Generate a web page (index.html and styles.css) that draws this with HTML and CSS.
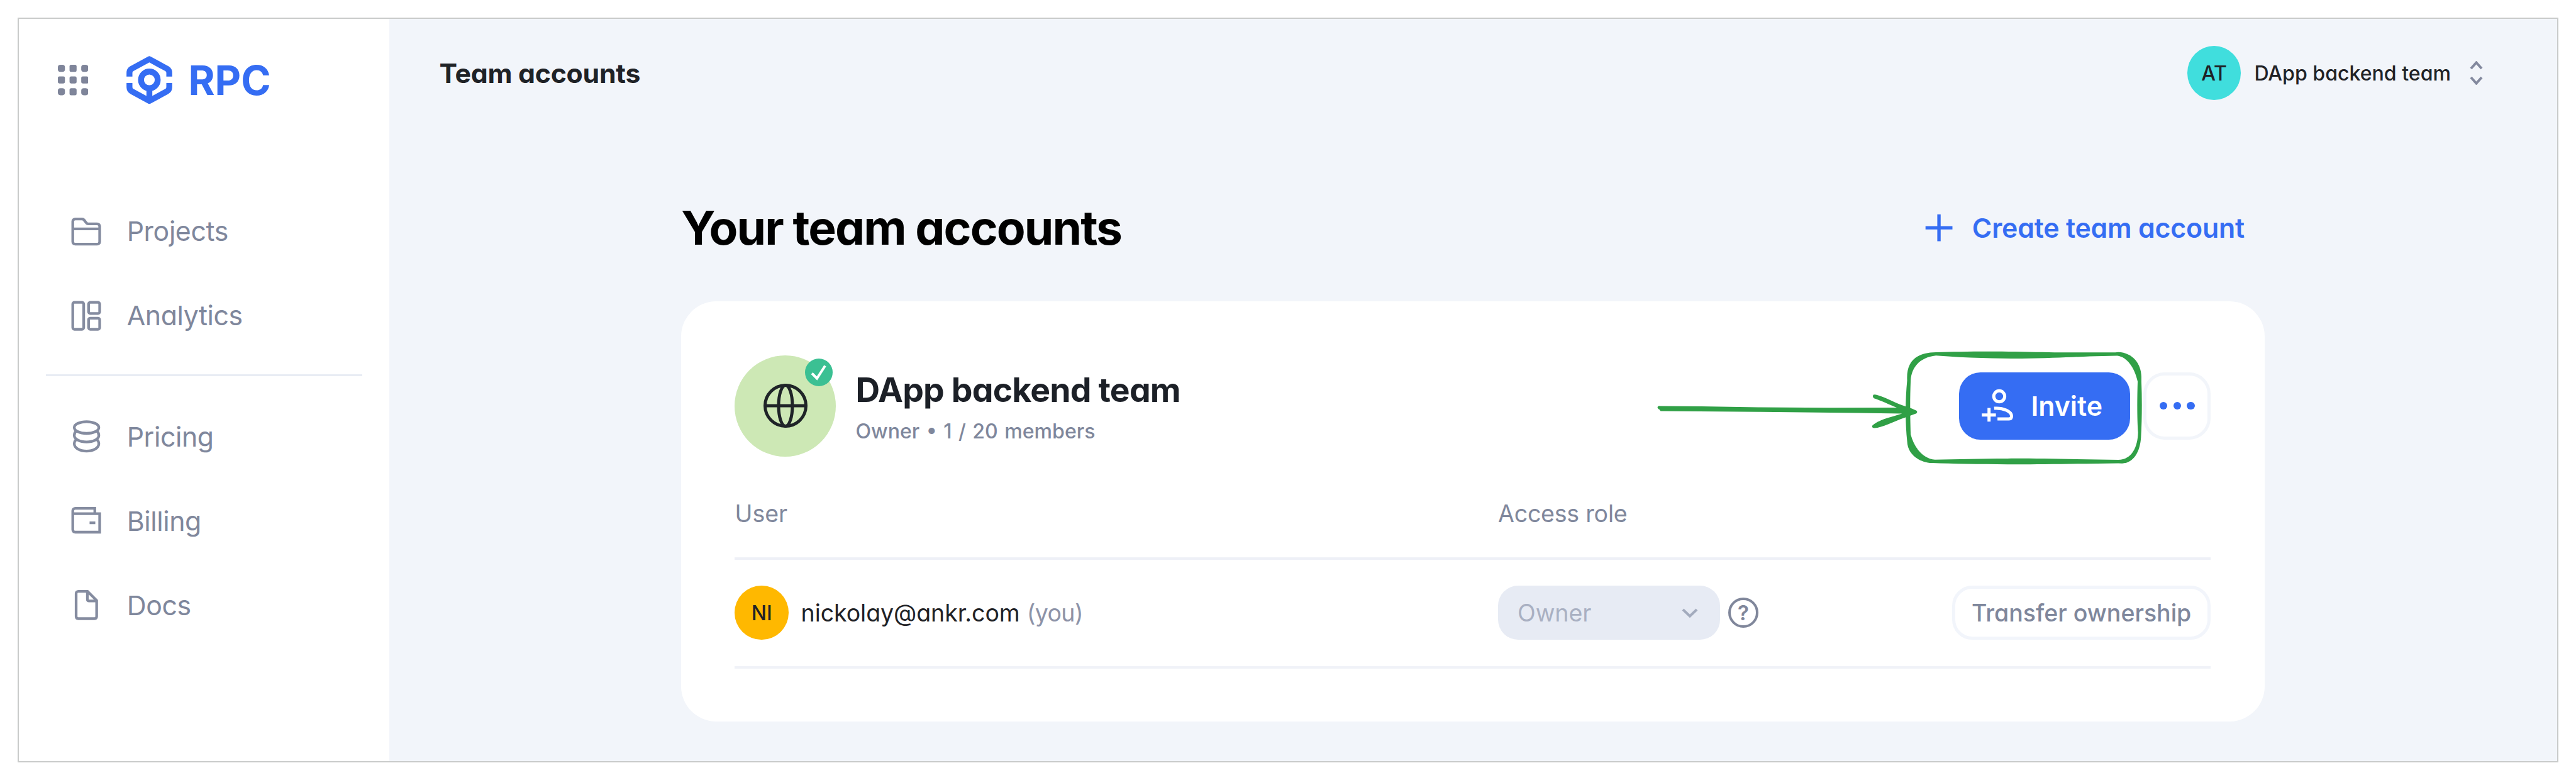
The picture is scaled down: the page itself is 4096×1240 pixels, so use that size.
FILE: index.html
```html
<!DOCTYPE html>
<html lang="en">
<head>
<meta charset="utf-8">
<title>Team accounts</title>
<link rel="stylesheet" href="styles.css">
</head>
<body>
<div class="frame">
  <aside class="sidebar">
    <div class="brand">
      <svg class="apps" viewBox="0 0 155 155"><rect width="36" height="36" rx="13"/><rect x="59.5" width="36" height="36" rx="8"/><rect x="119" width="36" height="36" rx="13"/><rect y="59.5" width="36" height="36" rx="8"/><rect x="59.5" y="59.5" width="36" height="36" rx="8"/><rect x="119" y="59.5" width="36" height="36" rx="8"/><rect y="119" width="36" height="36" rx="13"/><rect x="59.5" y="119" width="36" height="36" rx="8"/><rect x="119" y="119" width="36" height="36" rx="13"/></svg>
      <svg class="logo" viewBox="0 0 234 245"><path d="M15.500 105V86Q15.500 72 27 65L117 16L207 65Q218.500 72 218.500 86V105"/><path d="M15.500 138V159Q15.500 173 27 180L117 229L207 180Q218.500 173 218.500 159V138"/><circle cx="117" cy="122" r="42.500"/><path d="M117 164V226"/></svg>
      <span class="brand-name">RPC</span>
    </div>
    <nav class="nav">
      <a class="nav-item"><svg class="icon" viewBox="0 0 24 24"><path d="M4 6c0-.9.600-1.500 1.500-1.500h4c.5 0 .9.200 1.200.6l1.400 1.800c.3.300.6.500 1 .5h5.400c.9 0 1.500.6 1.500 1.500v9.100c0 .9-.6 1.500-1.500 1.500h-13c-.9 0-1.500-.6-1.500-1.500zM4 10.400h16"/></svg><span>Projects</span></a>
      <a class="nav-item"><svg class="icon" viewBox="0 0 24 24"><rect x="4" y="4" width="6.500" height="16" rx="1"/><rect x="13.400" y="4" width="6.600" height="6.600" rx="1"/><rect x="13.400" y="13.400" width="6.600" height="6.600" rx="1"/></svg><span>Analytics</span></a>
      <hr class="nav-rule">
      <a class="nav-item"><svg class="icon" viewBox="0 0 24 24"><ellipse cx="12.200" cy="6.600" rx="7.300" ry="3.500"/><path d="M6 8.700c-.7.700-1.100 1.500-1.100 2.600 0 2.200 3.300 3.900 7.300 3.900s7.300-1.700 7.300-3.900c0-1.100-.4-1.900-1.100-2.600M6 13.700c-.7.700-1.100 1.500-1.100 2.600 0 2.500 3.300 4.300 7.300 4.300s7.300-1.800 7.300-4.300c0-1.100-.4-1.900-1.100-2.600"/></svg><span>Pricing</span></a>
      <a class="nav-item"><svg class="icon" viewBox="0 0 24 24"><path d="M4 6c0-.9.600-1.500 1.500-1.500h11.600v3.200M4 7.700h16v11H5.500c-.9 0-1.500-.6-1.500-1.500V6M14 13.100h3.400"/></svg><span>Billing</span></a>
      <a class="nav-item"><svg class="icon" viewBox="0 0 24 24"><path d="M7.300 3.800h5.500l5.400 5.400v9.500c0 .8-.5 1.300-1.300 1.300H7.300c-.8 0-1.300-.5-1.300-1.300V5.100c0-.8.500-1.300 1.300-1.300zM12.700 4v4.500c0 .6.400 1 1 1h4.300"/></svg><span>Docs</span></a>
    </nav>
  </aside>
  <main class="main">
    <header class="topbar">
      <span class="page-name">Team accounts</span>
      <div class="switcher">
        <span class="avatar avatar-team">AT</span>
        <span class="switcher-name">DApp backend team</span>
        <svg class="updown" viewBox="0 0 21 38"><path d="M2 12L10.500 2.500L19 12M2 26L10.500 35.500L19 26"/></svg>
      </div>
    </header>
    <section class="content">
      <div class="heading">
        <h1>Your team accounts</h1>
        <a class="create"><svg class="plus" viewBox="0 0 24 24"><path d="M12 4v16M4 12h16"/></svg><span>Create team account</span></a>
      </div>
      <div class="card">
        <div class="team">
          <div class="team-pic">
            <svg class="globe" viewBox="0 0 70 70"><circle cx="35" cy="35" r="32.500"/><ellipse cx="35" cy="35" rx="11" ry="32.500"/><path d="M2.500 35h65"/></svg>
            <svg class="verified" viewBox="0 0 44 44"><circle cx="22" cy="22" r="22"/><path d="M11 23.500L19 31.500L32 11.500"/></svg>
          </div>
          <div class="team-text">
            <h2>DApp backend team</h2>
            <p class="team-meta">Owner • 1 / 20 members</p>
          </div>
          <div class="team-actions">
            <button class="invite"><svg class="user-plus" viewBox="620 245 172 180"><circle cx="716" cy="287" r="28"/><path d="M664 346v70M627 382h72M690 348C735 344 779 364 779 388C779 397 774 402 766 402H707"/></svg><span>Invite</span></button>
            <button class="more"><i></i><i></i><i></i></button>
          </div>
        </div>
        <div class="table">
          <div class="row head"><span>User</span><span class="role-head">Access role</span></div>
          <div class="row member">
            <div class="user"><span class="avatar avatar-user">NI</span><span class="email">nickolay@ankr.com</span><span class="you">(you)</span></div>
            <div class="role">
              <div class="select"><span>Owner</span><svg class="chevron" viewBox="0 0 26 15"><path d="M2 2L13 12.500L24 2"/></svg></div>
              <span class="help">?</span>
            </div>
            <button class="transfer">Transfer ownership</button>
          </div>
        </div>
      </div>
    </section>
  </main>
</div>
<svg class="marker" viewBox="-1040 40 2500 600">
  <path fill-rule="evenodd" d="M395 56C500 53 640 50 800 53C900 55 980 57 1060 57H1310L1325 55C1400 58 1442 115 1443 180V205C1447 300 1446 400 1441 490C1437 560 1405 621 1345 623L1325 622C1100 625 900 629 760 628C620 627 480 625 375 621C305 617 250 575 248 510C238 420 238 300 248 200C243 110 285 58 395 56ZM395 73C560 86 700 88 830 88C980 87 1100 80 1180 77L1320 74C1370 80 1408 135 1424 205C1421 300 1421 400 1426 465C1424 540 1395 603 1325 605C1100 602 900 597 760 598C620 598 500 602 390 604C335 600 285 550 266 475C263 370 262 300 266 200C270 130 315 82 395 73Z"/>
  <path d="M-1026 336Q-1024 329 -1012 330L-800 332L-500 337L-150 339L195 338C160 325 110 300 79 291Q69 284 76 273Q82 270 98 275C150 290 195 320 240 332L272 343L295 354Q303 361 295 368L240 388C170 412 125 440 80 443Q67 441 70 431C85 415 110 405 130 397C160 387 190 380 222 369L0 366L-500 360L-1010 356L-1016 348Q-1024 346 -1026 336Z"/>
</svg>
</body>
</html>
```
FILE: styles.css
```css
* { box-sizing: border-box; }

body {
  margin: 0;
  padding: 28px;
  width: 4096px;
  height: 1240px;
  overflow: hidden;
  background: #fff;
  color: #1f2226;
  font-family: Inter, "Liberation Sans", sans-serif;
  font-feature-settings: "cv11";
}

h1, h2, p { margin: 0; }
svg { display: block; flex: none; }
button { padding: 0; border: 0; background: none; font: inherit; font-feature-settings: inherit; color: inherit; }

.frame {
  display: flex;
  width: 4040px;
  height: 1184px;
  border: 2px solid #c9cbca;
}

.sidebar { width: 588.500px; flex: none; }

.brand {
  display: flex;
  align-items: center;
  height: 195px;
  padding-left: 62px;
}
.apps { width: 48.400px; height: 48.400px; fill: #7f859a; }
.logo {
  width: 73px;
  height: 76.400px;
  margin-left: 61px;
  fill: none;
  stroke: #356df3;
  stroke-width: 30;
  stroke-linejoin: round;
}
.brand-name {
  margin-left: 25px;
  font-size: 64.200px;
  font-weight: 700;
  color: #356df3;
}

.nav { padding: 76px 43px 0; }
.nav-item {
  display: flex;
  align-items: center;
  gap: 32.500px;
  height: 133.800px;
  padding-left: 32px;
  font-size: 42.800px;
  letter-spacing: -0.4px;
  color: #7f879c;
}
.icon {
  width: 64.200px;
  height: 64.200px;
  fill: none;
  stroke: #858ca0;
  stroke-width: 1.600;
}
.nav-rule { height: 3px; margin: 26px 0 30px; border: 0; background: #e8ecf4; }

.main { flex: 1; background: #f2f5fa; }

.topbar {
  display: flex;
  align-items: center;
  justify-content: space-between;
  height: 172px;
  padding: 0 118px 0 80px;
}
.page-name { font-size: 42.800px; font-weight: 700; letter-spacing: -0.27px; }
.switcher { display: flex; align-items: center; font-size: 32.100px; font-weight: 500; }
.switcher-name { margin-left: 21px; }
.updown { width: 21px; height: 38px; margin-left: 30px; fill: none; stroke: #83899e; stroke-width: 4; }

.avatar {
  display: flex;
  align-items: center;
  justify-content: center;
  width: 85.600px;
  height: 85.600px;
  border-radius: 50%;
  font-size: 32.100px;
  font-weight: 500;
}
.avatar-team { background: #40dedd; }
.avatar-user { background: #ffb800; }

.content { width: 2518px; margin-left: 464.400px; }
.heading {
  display: flex;
  align-items: center;
  justify-content: space-between;
  height: 107px;
  margin: 107px 0 63px;
  padding-right: 32px;
}
h1 { font-size: 74.900px; font-weight: 700; line-height: 1; letter-spacing: -1.95px; color: #000; }
.create {
  display: flex;
  align-items: center;
  gap: 21px;
  font-size: 42.800px;
  font-weight: 600;
  letter-spacing: -0.18px;
  color: #356df3;
}
.plus { width: 64.200px; height: 64.200px; fill: none; stroke: currentColor; stroke-width: 2; }

.card {
  height: 668px;
  padding: 85.600px;
  border-radius: 56px;
  background: #fff;
}
.team { display: flex; align-items: center; height: 161px; }
.team-pic {
  position: relative;
  display: flex;
  align-items: center;
  justify-content: center;
  width: 161px;
  height: 161px;
  border-radius: 50%;
  background: #cde8b5;
}
.globe { width: 70px; height: 70px; fill: none; stroke: #1f2428; stroke-width: 5; }
.verified { position: absolute; top: 5px; right: 5px; width: 44px; height: 44px; fill: #3bc093; }
.verified path { fill: none; stroke: #fff; stroke-width: 4; }
.team-text { margin-left: 31px; padding-top: 9.500px; }
h2 { font-size: 53.500px; font-weight: 700; line-height: 72px; letter-spacing: -0.82px; color: #1c2027; }
.team-meta { font-size: 32.100px; font-weight: 500; line-height: 60px; word-spacing: 1.900px; color: #7f879c; }
.team-actions { display: flex; gap: 21.500px; margin-left: auto; }
.invite {
  display: flex;
  align-items: center;
  width: 272px;
  height: 107px;
  padding-left: 34px;
  border-radius: 34px;
  background: #356df3;
  color: #fff;
  font-size: 42.800px;
  font-weight: 600;
}
.user-plus { width: 53.600px; height: 56.100px; margin-right: 27px; fill: none; stroke: #fff; stroke-width: 16; }
.more {
  display: flex;
  align-items: center;
  justify-content: center;
  gap: 9.500px;
  width: 107px;
  height: 107px;
  border: 5px solid #f2f5fa;
  border-radius: 34px;
}
.more i { width: 12.400px; height: 12.400px; border-radius: 50%; background: #356df3; }

.row { display: grid; grid-template-columns: 1213.500px 1fr auto; align-items: center; font-size: 37.500px; }
.head { height: 164px; padding-top: 22px; border-bottom: 4px solid #eef0f7; color: #7f879c; }
.role-head { letter-spacing: -0.2px; }
.member { height: 173px; border-bottom: 4px solid #f0f2f8; }
.user { display: flex; align-items: center; }
.email { margin-left: 19.500px; letter-spacing: -0.07px; }
.you { margin-left: 11px; letter-spacing: -0.6px; color: #8d93a8; }
.role { display: flex; align-items: center; }
.select {
  display: flex;
  align-items: center;
  justify-content: space-between;
  width: 353px;
  height: 85.600px;
  padding: 0 35px 0 31px;
  border-radius: 32px;
  background: #e7ebf4;
  color: #a9b0c2;
}
.chevron { width: 26px; height: 15px; fill: none; stroke: #a3abbd; stroke-width: 4; }
.help {
  display: flex;
  align-items: center;
  justify-content: center;
  width: 48px;
  height: 48px;
  margin-left: 13px;
  border: 4.500px solid #80879b;
  border-radius: 50%;
  color: #80879b;
  font-size: 33px;
  font-weight: 600;
}
.transfer {
  height: 85.600px;
  padding: 0 26px;
  border: 5px solid #f2f5fb;
  border-radius: 32px;
  color: #7f879c;
  font-weight: 500;
}

/* Hand-drawn arrow and outline over the invite button */
.marker { position: absolute; left: 2630.900px; top: 554.900px; width: 779.300px; height: 187px; fill: #30a046; }
```
